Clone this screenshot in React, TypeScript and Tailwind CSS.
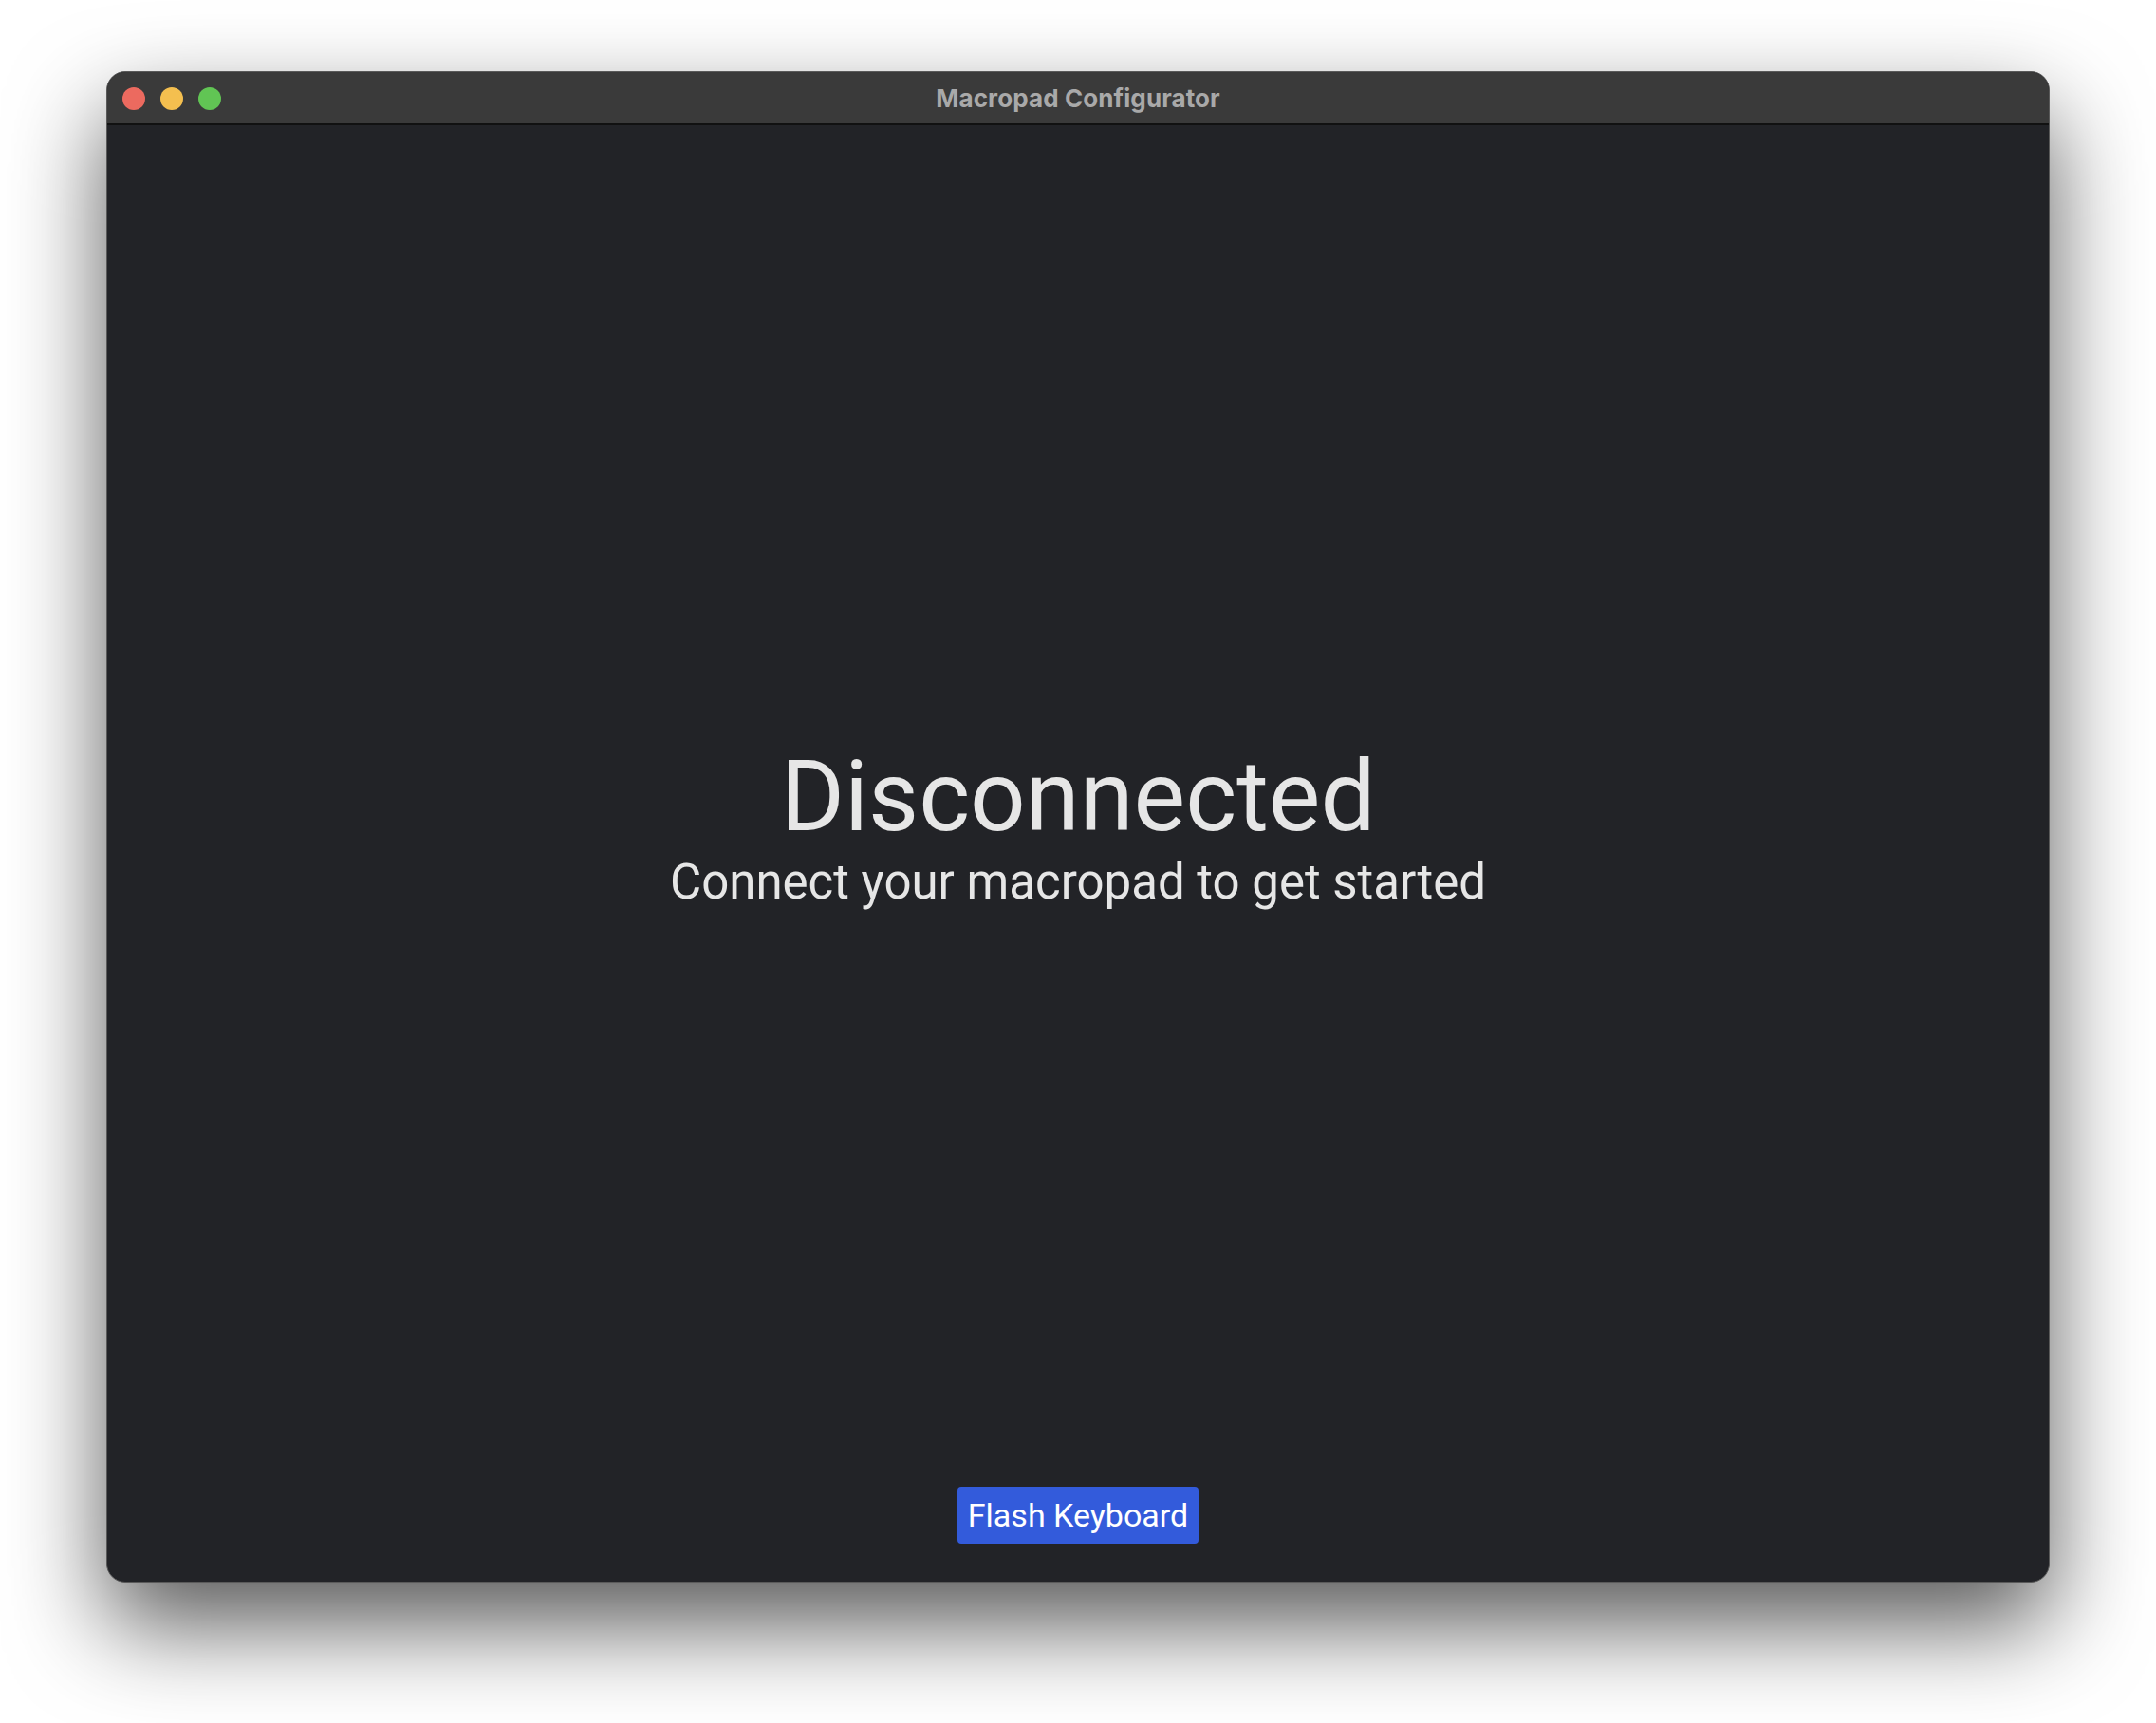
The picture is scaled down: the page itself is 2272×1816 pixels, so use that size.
import React from "react";

export default function App() {
  return (
    <div className="w-[2272px] h-[1816px] bg-white flex justify-center pt-[75px]" style={{ fontFamily: "Roboto, sans-serif" }}>
      <div className="w-[2048px] h-[1593px] rounded-[20px] overflow-hidden flex flex-col border border-[#5a5a5a] shadow-[0_45px_100px_rgba(0,0,0,0.65)] bg-[#222327]">
        <div className="h-[56px] shrink-0 bg-[#3a3a3a] border-b-2 border-[#111] relative flex items-center justify-center">
          <div className="absolute left-[16px] top-[16px] flex gap-[16px]">
            <div className="w-[24px] h-[24px] rounded-full bg-[#ec6a5f]" />
            <div className="w-[24px] h-[24px] rounded-full bg-[#f4bf4f]" />
            <div className="w-[24px] h-[24px] rounded-full bg-[#61c554]" />
          </div>
          <span className="text-[26px] font-bold text-[#a9a9a9] tracking-[0.1px]" style={{ fontFamily: "Inter, sans-serif" }}>
            Macropad Configurator
          </span>
        </div>
        <div className="flex-1 flex flex-col items-center">
          <div className="mt-[648px] flex flex-col items-center text-[#e6e6e6]">
            <div className="text-[103px] font-normal leading-[120px]">Disconnected</div>
            <div className="text-[51px] leading-[56px] mt-[2px]">Connect your macropad to get started</div>
          </div>
          <div className="flex-1" />
          <button className="h-[60px] px-[11px] mb-[40px] rounded-[4px] bg-[#335bdb] text-white text-[34px] leading-[60px]">
            Flash Keyboard
          </button>
        </div>
      </div>
    </div>
  );
}
